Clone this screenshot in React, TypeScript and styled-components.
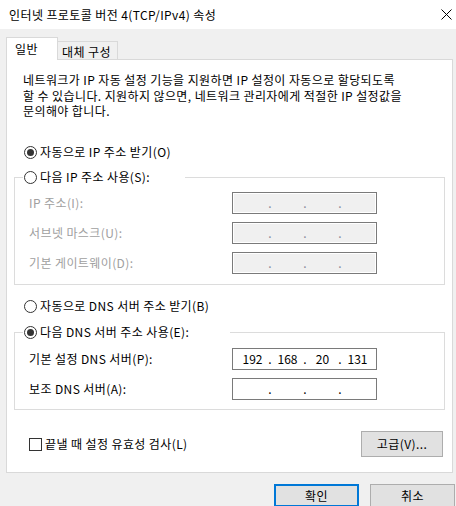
import React from "react";
import styled, { createGlobalStyle } from "styled-components";

const Global = createGlobalStyle`
  html, body {
    margin: 0;
    padding: 0;
    width: 456px;
    height: 506px;
    overflow: hidden;
    background: #f0f0f0;
  }
  body {
    font-family: "Noto Sans CJK KR", "Noto Sans", sans-serif;
    font-size: 12px;
    letter-spacing: 0.4px;
    color: #000;
  }
  * { box-sizing: border-box; }
`;

const Window = styled.div`
  width: 456px;
  height: 506px;
  display: flex;
  flex-direction: column;
  background: #f0f0f0;
  overflow: hidden;
`;

const TitleBar = styled.div`
  height: 29px;
  flex-shrink: 0;
  background: #fff;
  display: flex;
  align-items: center;
  padding: 0 4px 0 9px;
`;

const Title = styled.div`
  flex: 1;
  line-height: 16px;
  white-space: nowrap;
`;

const TabRow = styled.div`
  display: flex;
  align-items: flex-end;
  margin: 8px 0 0 6px;
  position: relative;
  z-index: 1;
`;

const Tab = styled.div<{ $active?: boolean }>`
  border: 1px solid #d9d9d9;
  border-bottom: none;
  white-space: nowrap;
  line-height: 15px;
  ${(p) =>
    p.$active
      ? `
    width: 52px;
    height: 23px;
    background: #fff;
    margin-bottom: -1px;
    padding: 3px 0 0 8px;
    position: relative;
    z-index: 2;
  `
      : `
    width: 61px;
    height: 18px;
    background: #f0f0f0;
    margin-left: -1px;
    padding: 2px 0 0 4px;
  `}
`;

const Panel = styled.div`
  margin: 0 3px 0 6px;
  border: 1px solid #d9d9d9;
  background: #fff;
  padding: 12px 7px 15px 7px;
  display: flex;
  flex-direction: column;
`;

const Description = styled.div`
  margin-left: 9px;
  line-height: 15.5px;
  white-space: nowrap;
`;

const RadioRow = styled.div<{ $mt: number }>`
  height: 16px;
  margin-top: ${(p) => p.$mt}px;
  margin-left: 10px;
  display: flex;
  align-items: center;
  gap: 3px;
  white-space: nowrap;
  line-height: 16px;
`;

const RadioCircle = styled.span<{ $checked?: boolean }>`
  width: 13px;
  height: 13px;
  border-radius: 50%;
  border: 1px solid #333;
  background: #fff;
  display: flex;
  align-items: center;
  justify-content: center;
  flex-shrink: 0;
  &::after {
    content: "";
    width: 7px;
    height: 7px;
    border-radius: 50%;
    background: ${(p) => (p.$checked ? "#333" : "transparent")};
  }
`;

const Group = styled.div<{ $mt: number; $pt: number; $pb: number }>`
  position: relative;
  margin-top: ${(p) => p.$mt}px;
  border: 1px solid #dcdcdc;
  padding: ${(p) => p.$pt}px 0 ${(p) => p.$pb}px 0;
  display: flex;
  flex-direction: column;
  gap: 8px;
`;

const Legend = styled.div<{ $w: number }>`
  position: absolute;
  top: -9px;
  left: 8px;
  width: ${(p) => p.$w}px;
  height: 16px;
  background: #fff;
  padding-left: 1px;
  display: flex;
  align-items: center;
  gap: 3px;
  white-space: nowrap;
  line-height: 16px;
`;

const FieldRow = styled.div`
  display: grid;
  grid-template-columns: 203px 145px;
  align-items: center;
  height: 22px;
  padding-left: 14px;
`;

const FieldLabel = styled.span<{ $disabled?: boolean }>`
  color: ${(p) => (p.$disabled ? "#a0a0a0" : "#000")};
  white-space: nowrap;
  line-height: 16px;
`;

const IpBox = styled.div<{ $disabled?: boolean }>`
  width: 145px;
  height: 22px;
  border: 1px solid #7a7a7a;
  background: ${(p) => (p.$disabled ? "#f0f0f0" : "#fff")};
  box-shadow: ${(p) => (p.$disabled ? "inset 0 0 0 1px #fff" : "none")};
  display: flex;
  align-items: center;
  padding-left: 5px;
  color: ${(p) => (p.$disabled ? "#8a8a9a" : "#000")};
  line-height: 16px;
  letter-spacing: 0;
`;

const Seg = styled.span`
  width: 29px;
  text-align: center;
`;

const Dot = styled.span`
  width: 6px;
  text-align: center;
`;

const BottomRow = styled.div`
  height: 26px;
  margin-top: 21px;
  margin-right: 2px;
  padding-left: 15px;
  display: flex;
  align-items: center;
  justify-content: space-between;
`;

const CheckLabel = styled.div`
  display: flex;
  align-items: center;
  gap: 3px;
  white-space: nowrap;
  line-height: 16px;
`;

const CheckBox = styled.span`
  width: 13px;
  height: 13px;
  border: 1px solid #333;
  background: #fff;
  flex-shrink: 0;
`;

const Button = styled.div<{ $w: number; $h: number; $primary?: boolean }>`
  width: ${(p) => p.$w}px;
  height: ${(p) => p.$h}px;
  flex-shrink: 0;
  background: #e1e1e1;
  border: ${(p) => (p.$primary ? "2px solid #0078d7" : "1px solid #adadad")};
  display: flex;
  align-items: center;
  justify-content: center;
  white-space: nowrap;
  line-height: 16px;
`;

const Footer = styled.div`
  display: flex;
  justify-content: flex-end;
  gap: 11px;
  margin: 11px 1px 0 0;
`;

const CloseIcon = () => (
  <svg width="11" height="11" viewBox="0 0 11 11" fill="none">
    <path d="M0.5 0.5 L10.5 10.5 M10.5 0.5 L0.5 10.5" stroke="#000" strokeWidth="1" />
  </svg>
);

const IpField = ({ values, disabled }: { values: string[]; disabled?: boolean }) => (
  <IpBox $disabled={disabled}>
    <Seg>{values[0]}</Seg>
    <Dot>.</Dot>
    <Seg>{values[1]}</Seg>
    <Dot>.</Dot>
    <Seg>{values[2]}</Seg>
    <Dot>.</Dot>
    <Seg>{values[3]}</Seg>
  </IpBox>
);

const empty = ["", "", "", ""];

export default function App() {
  return (
    <Window>
      <Global />
      <TitleBar>
        <Title>인터넷 프로토콜 버전 4(TCP/IPv4) 속성</Title>
        <CloseIcon />
      </TitleBar>
      <TabRow>
        <Tab $active>일반</Tab>
        <Tab>대체 구성</Tab>
      </TabRow>
      <Panel>
        <Description>
          네트워크가 IP 자동 설정 기능을 지원하면 IP 설정이 자동으로 할당되도록
          <br />
          할 수 있습니다. 지원하지 않으면, 네트워크 관리자에게 적절한 IP 설정값을
          <br />
          문의해야 합니다.
        </Description>
        <RadioRow $mt={25.5}>
          <RadioCircle $checked />
          <span>자동으로 IP 주소 받기(O)</span>
        </RadioRow>
        <Group $mt={17} $pt={14} $pb={10}>
          <Legend $w={162}>
            <RadioCircle />
            <span>다음 IP 주소 사용(S):</span>
          </Legend>
          <FieldRow>
            <FieldLabel $disabled>IP 주소(I):</FieldLabel>
            <IpField values={empty} disabled />
          </FieldRow>
          <FieldRow>
            <FieldLabel $disabled>서브넷 마스크(U):</FieldLabel>
            <IpField values={empty} disabled />
          </FieldRow>
          <FieldRow>
            <FieldLabel $disabled>기본 게이트웨이(D):</FieldLabel>
            <IpField values={empty} disabled />
          </FieldRow>
        </Group>
        <RadioRow $mt={13}>
          <RadioCircle />
          <span>자동으로 DNS 서버 주소 받기(B)</span>
        </RadioRow>
        <Group $mt={18} $pt={15} $pb={9}>
          <Legend $w={207}>
            <RadioCircle $checked />
            <span>다음 DNS 서버 주소 사용(E):</span>
          </Legend>
          <FieldRow>
            <FieldLabel>기본 설정 DNS 서버(P):</FieldLabel>
            <IpField values={["192", "168", "20", "131"]} />
          </FieldRow>
          <FieldRow>
            <FieldLabel>보조 DNS 서버(A):</FieldLabel>
            <IpField values={empty} />
          </FieldRow>
        </Group>
        <BottomRow>
          <CheckLabel>
            <CheckBox />
            <span>끝낼 때 설정 유효성 검사(L)</span>
          </CheckLabel>
          <Button $w={82} $h={26}>고급(V)...</Button>
        </BottomRow>
      </Panel>
      <Footer>
        <Button $w={85} $h={23} $primary>확인</Button>
        <Button $w={85} $h={23}>취소</Button>
      </Footer>
    </Window>
  );
}
